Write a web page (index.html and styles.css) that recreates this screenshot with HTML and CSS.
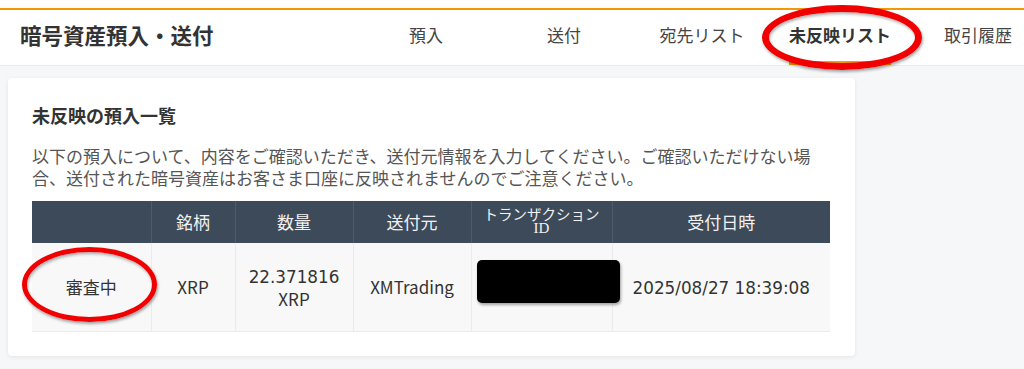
FILE: index.html
```html
<!DOCTYPE html>
<html lang="ja">
<head>
<meta charset="utf-8">
<title>暗号資産預入・送付</title>
<link rel="stylesheet" href="styles.css">
</head>
<body>
<header class="topbar">
  <div class="hdr">
    <h1 class="title">暗号資産預入・送付</h1>
    <nav class="nav">
      <a class="nav-item"><span>預入</span></a>
      <a class="nav-item"><span>送付</span></a>
      <a class="nav-item"><span>宛先リスト</span></a>
      <a class="nav-item active"><span>未反映リスト</span></a>
      <a class="nav-item"><span>取引履歴</span></a>
    </nav>
  </div>
</header>
<main class="main">
  <section class="card">
    <h2 class="card-title">未反映の預入一覧</h2>
    <p class="lead">以下の預入について、内容をご確認いただき、送付元情報を入力してください。ご確認いただけない場合、送付された暗号資産はお客さま口座に反映されませんのでご注意ください。</p>
    <table class="tbl">
      <colgroup>
        <col class="c1"><col class="c2"><col class="c3"><col class="c4"><col class="c5"><col class="c6">
      </colgroup>
      <thead>
        <tr>
          <th></th>
          <th>銘柄</th>
          <th>数量</th>
          <th>送付元</th>
          <th class="small"><span class="l1">トランザクション</span><span class="serif">ID</span></th>
          <th>受付日時</th>
        </tr>
      </thead>
      <tbody>
        <tr>
          <td>審査中</td>
          <td>XRP</td>
          <td><span class="num">22.371816</span><br>XRP</td>
          <td>XMTrading</td>
          <td></td>
          <td><span class="num">2025/08/27 18:39:08</span></td>
        </tr>
      </tbody>
    </table>
  </section>
</main>
<div class="redact"></div>
<div class="ring ring-nav"></div>
<div class="ring ring-status"></div>
</body>
</html>
```

FILE: styles.css
```css
html, body {
  margin: 0;
  padding: 0;
}
body {
  width: 1024px;
  height: 369px;
  overflow: hidden;
  background: #f6f7f9;
  font-family: "Noto Sans CJK JP", "Noto Sans", sans-serif;
  color: #333;
  position: relative;
}
.topbar {
  background: #fff;
  padding-top: 8px;
  border-bottom: 1px solid #e8eaed;
  overflow: hidden;
}
.hdr {
  display: flex;
  height: 55px;
  border-top: 2px solid #f39800;
}
.title {
  flex-shrink: 0;
  margin: 0;
  width: 357px;
  padding-left: 20px;
  box-sizing: border-box;
  font-size: 21.5px;
  font-weight: bold;
  line-height: 49px;
  color: #333;
  white-space: nowrap;
}
.nav {
  display: flex;
  flex-shrink: 0;
}
.nav-item {
  flex-shrink: 0;
  width: 138px;
  height: 55px;
  display: flex;
  justify-content: center;
  font-size: 17px;
  color: #444;
  white-space: nowrap;
}
.nav-item span {
  display: flex;
  align-items: center;
  height: 55px;
  box-sizing: border-box;
  padding-bottom: 6px;
}
.nav-item.active span {
  font-weight: bold;
  color: #333;
  border-bottom: 4px solid #f5a300;
  padding-bottom: 2px;
}
.main {
  padding: 12px 8px 0;
}
.card {
  width: 847px;
  box-sizing: border-box;
  background: #fff;
  border-radius: 4px;
  box-shadow: 0 1px 4px rgba(0, 0, 0, 0.08);
  padding: 24px 24px 24px;
}
.card-title {
  margin: 0;
  font-size: 18px;
  line-height: 26px;
  font-weight: bold;
  color: #333;
}
.lead {
  margin: 17px 0 12px;
  max-width: 790px;
  font-size: 17px;
  line-height: 22px;
  color: #555;
}
.tbl {
  width: 798px;
  border-collapse: collapse;
  table-layout: fixed;
  font-size: 17px;
}
.c1 { width: 119px; }
.c2 { width: 84px; }
.c3 { width: 118px; }
.c4 { width: 118px; }
.c5 { width: 141px; }
.c6 { width: 218px; }
.tbl th {
  height: 42px;
  padding: 0;
  background: #3d4a5a;
  color: #f2f2f2;
  font-weight: normal;
  border-left: 1px solid #4f5b6a;
  text-align: center;
  line-height: 20px;
}
.tbl th:first-child { border-left: none; }
.tbl th.small {
  font-size: 14.5px;
  vertical-align: top;
  padding-top: 5px;
  box-sizing: border-box;
}
.l1 {
  display: block;
  line-height: 15px;
  height: 15px;
}
.serif {
  display: block;
  font-family: "Liberation Serif", serif;
  font-size: 15px;
  line-height: 14px;
}
.tbl td {
  height: 88px;
  padding: 0;
  background: #f8f8f8;
  border-left: 1px solid #ebebeb;
  border-bottom: 1px solid #ebebeb;
  text-align: center;
  line-height: 22px;
  color: #333;
}
.tbl td:first-child { border-left: none; }
.num {
  font-family: "DejaVu Sans", sans-serif;
  font-size: 16.8px;
}
.redact {
  position: absolute;
  left: 477px;
  top: 260px;
  width: 143px;
  height: 43px;
  background: #000;
  border-radius: 5px;
  box-shadow: 1px 2px 3px rgba(0, 0, 0, 0.35);
}
.ring {
  position: absolute;
  border: 6px solid #f00000;
  border-radius: 50%;
  box-sizing: border-box;
  box-shadow: 1px 2px 3px rgba(0, 0, 0, 0.35), inset 1px 2px 3px rgba(0, 0, 0, 0.3);
}
.ring-nav {
  left: 762px;
  top: 5px;
  width: 160px;
  height: 65px;
  border-width: 7px;
}
.ring-status {
  left: 22px;
  top: 247px;
  width: 135px;
  height: 75px;
  border-width: 5px;
}
```
